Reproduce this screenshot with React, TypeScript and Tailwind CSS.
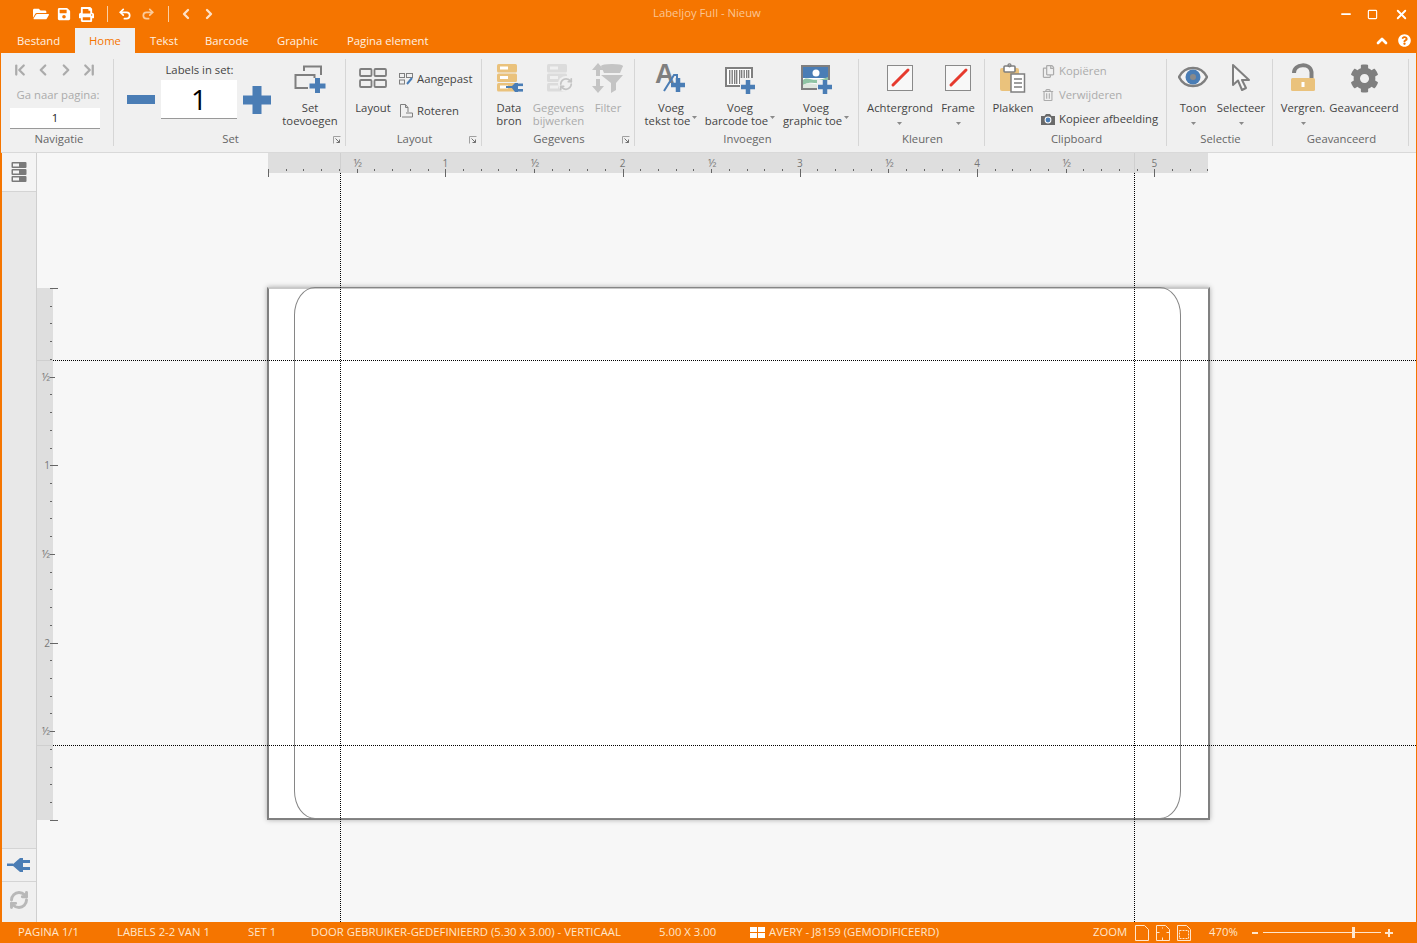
import React from "react";
import { FaFolderOpen, FaSave, FaPrint, FaCog, FaRegTrashAlt, FaRegCopy, FaQuestionCircle } from "react-icons/fa";
import { ChevronLeft, ChevronRight, ChevronUp, ChevronFirst, ChevronLast, Undo2, Redo2, RefreshCw, Minus, Square, X } from "lucide-react";

const BLUE = "#4a7db5";
const TAN = "#eac27c";
const GRAY = "#7f7f7f";

const Plus = ({ x, y, s = 14, t = 4, c = BLUE }: { x: number; y: number; s?: number; t?: number; c?: string }) => (
  <g fill={c}>
    <rect x={x - s / 2} y={y - t / 2} width={s} height={t} />
    <rect x={x - t / 2} y={y - s / 2} width={t} height={s} />
  </g>
);

const DataIcon = ({ c, plug = true, slot = "#fff" }: { c: string; plug?: boolean; slot?: string }) => (
  <svg width="28" height="28" viewBox="0 0 28 28" className="translate-x-[2px]">
    {[0, 9.5, 19].map((y) => (
      <g key={y}>
        <rect x="0" y={y} width="20" height="8.5" rx="1.5" fill={c} />
        <rect x="3" y={y + 2.5} width="8" height="3" fill={slot} />
      </g>
    ))}
    {plug ? (
      <g fill={BLUE}>
        <rect x="9" y="22" width="7" height="2" />
        <path d="M14 23l4-4h3v9h-3z" />
        <rect x="21" y="19.5" width="5" height="2.6" />
        <rect x="21" y="25" width="5" height="2.6" />
      </g>
    ) : (
      <g>
        <circle cx="19" cy="20" r="8" fill="#f0f0f0" />
        <foreignObject x="12" y="13" width="14" height="14">
          <RefreshCw size={14} strokeWidth={3} color="#c4c4c4" />
        </foreignObject>
      </g>
    )}
  </svg>
);

const FilterIcon = () => (
  <svg width="32" height="30" viewBox="0 0 32 30" fill="#c4c4c4">
    <path d="M9 12h22l-7 8v7l-5 3V20z" />
    <ellipse cx="20" cy="3" rx="11" ry="2" />
    <path d="M9 3h22l-3 7H12z" />
    <path d="M6 0l6 7H8v6H4V7H0z" />
    <path d="M6 30L0 23h4v-7h4v7h4z" />
  </svg>
);

const TextIcon = () => (
  <svg width="32" height="32" viewBox="0 0 32 32" className="overflow-visible">
    <text x="0" y="21" fontFamily="Liberation Sans" fontWeight="700" fontSize="27" fill={GRAY}>A</text>
    <path d="M9 29L19 13h3v16" fill="none" stroke={BLUE} strokeWidth="2" />
    <Plus x={23} y={23} s={14} t={4.5} />
  </svg>
);

const BarcodeIcon = () => (
  <svg width="32" height="30" viewBox="0 0 32 30" className="translate-y-[2px] translate-x-[1px]">
    <rect x="1" y="3" width="26" height="18" fill="#fff" stroke={GRAY} strokeWidth="2" />
    {[4, 6.5, 9, 11, 14, 16, 18.5, 21, 23].map((x) => (
      <rect key={x} x={x} y="5" width="1.4" height="14" fill={GRAY} />
    ))}
    <rect x="15" y="13" width="17" height="17" fill="#f0f0f0" />
    <Plus x={23} y={22} s={14} t={4.5} />
  </svg>
);

const GraphicIcon = () => (
  <svg width="32" height="30" viewBox="0 0 32 30" className="translate-y-[2px] translate-x-[1px]">
    <rect x="1" y="1" width="27" height="23" fill="#fff" stroke={GRAY} strokeWidth="2" />
    <rect x="2" y="2" width="25" height="11" fill={BLUE} />
    <circle cx="15" cy="8" r="3.5" fill="#fff" />
    <path d="M2 15c5-5 10 4 25-3v5c-8 5-14-3-25 3z" fill="#8fc4a4" />
    <path d="M2 20c8-5 14 3 25-3v6H2z" fill="#dfe7df" />
    <rect x="16" y="15" width="16" height="15" fill="#f0f0f0" />
    <Plus x={24} y={22} s={14} t={4.5} />
  </svg>
);

const ColorIcon = () => (
  <svg width="26" height="26" viewBox="0 0 26 26">
    <rect x="0.5" y="0.5" width="25" height="25" fill="#f8f8f8" stroke="#8a8a8a" />
    <path d="M6 20L21 5" stroke="#e63a2e" strokeWidth="3" strokeLinecap="round" />
  </svg>
);

const ClipboardIcon = () => (
  <svg width="26" height="30" viewBox="0 0 26 30">
    <rect x="0" y="5" width="19" height="23" rx="2" fill={TAN} />
    <rect x="4" y="3" width="11" height="6" rx="1" fill="#fff" stroke={GRAY} strokeWidth="1.6" />
    <rect x="8" y="0.8" width="3" height="3" rx="1.5" fill="none" stroke={GRAY} strokeWidth="1.2" />
    <rect x="11" y="11" width="13.5" height="18" fill="#fff" stroke={GRAY} strokeWidth="1.5" />
    <path d="M14 16h8M14 20h8M14 24h8" stroke={GRAY} strokeWidth="1.6" />
  </svg>
);

const EyeIcon = () => (
  <svg width="30" height="24" viewBox="0 0 30 24" className="-translate-y-[1px]">
    <path d="M1 12C7 0 23 0 29 12C23 24 7 24 1 12z" fill="#f4f4f4" stroke={GRAY} strokeWidth="2.4" />
    <circle cx="15" cy="12" r="7.5" fill={BLUE} />
    <circle cx="15" cy="12" r="3" fill="#8a8a8a" />
  </svg>
);

const CursorIcon = () => (
  <svg width="20" height="30" viewBox="0 0 20 30">
    <path d="M2 2v20l5-4.5L11 27l4-2-4-8h7z" fill="#f6f6f6" stroke={GRAY} strokeWidth="2" strokeLinejoin="round" />
  </svg>
);

const LockIcon = () => (
  <svg width="26" height="30" viewBox="0 0 26 30">
    <path d="M4 10C4 1 20-1 21.500 9v6" fill="none" stroke={GRAY} strokeWidth="4" />
    <rect x="1" y="15" width="24" height="13" rx="1.5" fill={TAN} />
    <rect x="11.500" y="19" width="3" height="5" fill="#fff" />
  </svg>
);

const SetIcon = () => (
  <svg width="32" height="30" viewBox="0 0 32 30" fill="none">
    <path d="M10 8V3.500h17V12" stroke={GRAY} strokeWidth="2" />
    <path d="M14 25H1.500V12h19v3" stroke={GRAY} strokeWidth="2" />
    <Plus x={23.500} y={23} s={16} t={5} />
  </svg>
);

const LayoutIcon = () => (
  <svg width="28" height="20" viewBox="0 0 28 20" fill="none" stroke={GRAY} strokeWidth="1.8">
    <rect x="1" y="1" width="11.500" height="7" rx="1" />
    <rect x="15.500" y="1" width="11.500" height="7" rx="1" />
    <rect x="1" y="12" width="11.500" height="7" rx="1" />
    <rect x="15.500" y="12" width="11.500" height="7" rx="1" />
  </svg>
);

const CustomIcon = () => (
  <svg width="14" height="12" viewBox="0 0 14 12" fill="none" stroke={GRAY}>
    <rect x="0.500" y="0.500" width="5" height="4" />
    <rect x="7.500" y="0.500" width="6" height="4" />
    <rect x="0.500" y="7" width="5" height="4" />
    <path d="M8 11l5-6" stroke={BLUE} strokeWidth="2" />
  </svg>
);

const RotateIcon = () => (
  <svg width="14" height="14" viewBox="0 0 14 14" fill="none" stroke={GRAY}>
    <path d="M1.500 13V0.500h5l2.500 3V8M3 13h10.500V9H7" />
    <path d="M6.500 0.500v3H9" />
  </svg>
);

const CameraIcon = () => (
  <svg width="14" height="12" viewBox="0 0 14 12">
    <path d="M0 3h3.500L5 1h4l1.500 2H14v9H0z" fill="#6a6a6a" />
    <circle cx="7" cy="7" r="3.400" fill="#fff" />
    <circle cx="7" cy="7" r="2.400" fill={BLUE} />
  </svg>
);

const Launcher = () => (
  <svg width="8" height="8" viewBox="0 0 8 8" className="absolute right-[4px] bottom-[2px]" fill="none">
    <path d="M0.500 7.500V0.500h7" stroke="#a0a0a0" />
    <path d="M2.500 2.500l4 4M6.500 3.500v3h-3" stroke="#707070" />
  </svg>
);

const Caret = () => (
  <svg width="5" height="3" viewBox="0 0 5 3" className="inline-block">
    <path d="M0 0h5L2.500 3z" fill="#8a8a8a" />
  </svg>
);

const Group = ({ w, label, launcher, children }: { w: number; label: string; launcher?: boolean; children: React.ReactNode }) => (
  <div className="relative flex flex-col border-r border-[#d6d6d6] shrink-0" style={{ width: w }}>
    <div className="flex flex-1">{children}</div>
    <div className="h-[14px] leading-[14px] text-center text-[#666] pl-[2px]">{label}</div>
    {launcher && <Launcher />}
  </div>
);

const Btn = ({
  w,
  icon,
  lines,
  caret,
  below,
  disabled,
}: {
  w: number;
  icon: React.ReactNode;
  lines: string[];
  caret?: boolean;
  below?: boolean;
  disabled?: boolean;
}) => (
  <div className={`flex flex-col items-center shrink-0 ${disabled ? "text-[#ababab]" : "text-[#444]"}`} style={{ width: w }}>
    <div className="h-[38px] flex items-center justify-center">{icon}</div>
    <div className="mt-[4px] text-center leading-[13px] whitespace-nowrap">
      {lines.map((l, i) => (
        <div key={l} className="h-[13px] flex items-center justify-center">
          {l}
          {caret && i === lines.length - 1 && (
            <span className="ml-[2px] h-[9px] flex items-start">
              <Caret />
            </span>
          )}
        </div>
      ))}
      {below && (
        <div className="h-[13px] mt-[3px] flex items-center justify-center">
          <Caret />
        </div>
      )}
    </div>
  </div>
);

const Row = ({ icon, text, disabled }: { icon: React.ReactNode; text: string; disabled?: boolean }) => (
  <div className={`flex items-center h-[24px] whitespace-nowrap ${disabled ? "text-[#ababab]" : "text-[#444]"}`}>
    <span className="w-[14px] mr-[4px] flex items-center justify-center">{icon}</span>
    {text}
  </div>
);

const Ruler = () => {
  const ticks = Array.from({ length: 54 }, (_, i) => i);
  return (
    <svg width="945" height="26" className="absolute left-[231px] top-0 overflow-visible">
      <rect x="0" y="0" width="940" height="20" fill="#dedede" />
      {ticks.map((i) => {
        const x = Math.round(i * 17.725) + 0.5;
        const major = i % 10 === 0;
        const half = i % 5 === 0;
        const y2 = major ? 24 : half ? 20 : 18;
        return <line key={i} x1={x} x2={x} y1={16} y2={y2} stroke="#666" />;
      })}
      {[1, 2, 3, 4, 5].map((n) => (
        <text key={n} x={n * 177.25} y="14" fontSize="10" fill="#777" textAnchor="middle">{n}</text>
      ))}
      {[0, 1, 2, 3, 4].map((n) => (
        <text key={n} x={(n + 0.5) * 177.25 + 1} y="14" fontSize="11" fill="#777" textAnchor="middle">½</text>
      ))}
      <line x1="72.500" x2="72.500" y1="0" y2="20" stroke="#cfcfcf" />
      <line x1="866.500" x2="866.500" y1="0" y2="20" stroke="#cfcfcf" />
    </svg>
  );
};

const SideRuler = () => {
  const ticks = Array.from({ length: 31 }, (_, i) => i);
  return (
    <svg width="22" height="533" className="absolute left-0 top-[135px] overflow-visible">
      <rect x="0" y="0" width="16" height="532" fill="#dedede" />
      {ticks.map((i) => {
        const y = Math.round(i * 17.725) + 0.5;
        const major = i % 10 === 0;
        const half = i % 5 === 0;
        const x2 = major ? 21 : half ? 18 : 15;
        return <line key={i} x1={13} x2={x2} y1={y} y2={y} stroke="#666" />;
      })}
      {[1, 2].map((n) => (
        <text key={n} x="10" y={n * 177.25 + 4} fontSize="10" fill="#777" textAnchor="middle">{n}</text>
      ))}
      {[0, 1, 2].map((n) => (
        <text key={n} x="9" y={(n + 0.5) * 177.25 + 4} fontSize="11" fill="#777" textAnchor="middle">½</text>
      ))}
      <line x1="0" x2="15" y1="72.500" y2="72.500" stroke="#cfcfcf" />
      <line x1="0" x2="15" y1="457.500" y2="457.500" stroke="#cfcfcf" />
    </svg>
  );
};

const PageIcon = ({ kind }: { kind: 0 | 1 | 2 }) => (
  <svg width="14" height="16" viewBox="0 0 14 16" fill="none" stroke="#ffe6cc" className="shrink-0">
    <path d="M0.500 0.500h9l4 4v11h-13z" />
    {kind === 1 && <path d="M0.500 7.500h3M10.500 7.500h3M6.500 2.500v1M6.500 12.500v3" />}
    {kind === 2 && <rect x="2.500" y="5.500" width="9" height="8" strokeDasharray="2 1" />}
  </svg>
);

export default function App() {
  return (
    <div
      className="w-[1417px] h-[943px] overflow-hidden flex flex-col bg-[#f57500] text-[11.3px]"
      style={{ fontFamily: '"Open Sans", sans-serif' }}
    >
      <header className="h-[28px] flex items-center relative text-white shrink-0">
        <div className="flex items-center pl-[29px]">
          <span className="w-[23px] flex justify-center"><FaFolderOpen size={16} /></span>
          <span className="w-[23px] flex justify-center"><FaSave size={14} /></span>
          <span className="w-[23px] flex justify-center"><FaPrint size={15} /></span>
          <span className="w-px h-[16px] bg-[#fbcfa3] ml-[9px] mr-[6px]" />
          <span className="w-[22px] flex justify-center"><Undo2 size={14} strokeWidth={3} /></span>
          <span className="w-[23px] flex justify-center text-[#fbcb9b]"><Redo2 size={14} strokeWidth={3} /></span>
          <span className="w-px h-[16px] bg-[#fbcfa3] ml-[9px] mr-[6px]" />
          <span className="w-[22px] flex justify-center text-[#fde2c8]"><ChevronLeft size={16} strokeWidth={3.5} /></span>
          <span className="w-[24px] flex justify-center text-[#fde2c8]"><ChevronRight size={16} strokeWidth={3.5} /></span>
        </div>
        <div className="absolute left-[653px] top-[5px] text-[#fbc694]">Labeljoy Full - Nieuw</div>
        <div className="ml-auto flex items-center pr-[7px]">
          <Minus size={14} strokeWidth={3} className="mr-[14px]" />
          <Square size={11} strokeWidth={2.5} className="mr-[16px]" />
          <X size={15} strokeWidth={3} className="mr-[1px]" />
        </div>
      </header>
      <nav className="h-[25px] flex items-stretch text-[#fff1e2] shrink-0 relative">
        <div className="w-[75px] pl-[17px] pt-[5px]">Bestand</div>
        <div className="w-[60px] bg-[#f0f0f0] text-[#f57500] text-center pt-[5px]">Home</div>
        <div className="w-[70px] pl-[15px] pt-[5px]">Tekst</div>
        <div className="w-[72px] pt-[5px]">Barcode</div>
        <div className="w-[70px] pt-[5px]">Graphic</div>
        <div className="pt-[5px]">Pagina element</div>
        <div className="ml-auto flex items-center pr-[6px] text-white">
          <ChevronUp size={16} strokeWidth={4} className="mr-[8px]" />
          <FaQuestionCircle size={13} />
        </div>
      </nav>

      <div className="h-[100px] mx-px bg-[#f0f0f0] border-b border-[#d9d9d9] flex pl-[2px] pt-[6px] pb-[6px] shrink-0">
        <Group w={111} label="Navigatie">
          <div className="w-full flex flex-col items-center">
            <div className="self-start ml-[8px] flex items-center gap-[5px] text-[#ababab] mt-[3px] h-[16px]">
              <ChevronFirst size={18} strokeWidth={3} />
              <ChevronLeft size={18} strokeWidth={3} />
              <ChevronRight size={18} strokeWidth={3} />
              <ChevronLast size={18} strokeWidth={3} />
            </div>
            <div className="text-[#ababab] mt-[9px] leading-[16px]">Ga naar pagina:</div>
            <div className="self-start ml-[7px] w-[90px] h-[21px] mt-[5px] bg-white border-b border-[#999] text-center leading-[20px] text-[#222]">1</div>
          </div>
        </Group>
        <Group w={232} label="Set" launcher>
          <div className="flex w-full">
            <div className="ml-[13px] w-[145px] flex flex-col">
              <div className="text-center text-[#444] leading-[16px] mt-[3px]">Labels in set:</div>
              <div className="flex items-center gap-[6px] mt-[2px]">
                <span className="w-[28px] h-[9px] bg-[#4a7db5]" />
                <div className="w-[76px] h-[39px] bg-white border-b border-[#999] text-center text-[28px] leading-[38px] text-black">1</div>
                <svg width="28" height="28" viewBox="0 0 28 28"><Plus x={14} y={14} s={28} t={9} /></svg>
              </div>
            </div>
            <div className="ml-[8px]"><Btn w={60} icon={<SetIcon />} lines={["Set", "toevoegen"]} /></div>
          </div>
        </Group>
        <Group w={136} label="Layout" launcher>
          <div className="flex w-full">
            <div className="ml-px"><Btn w={52} icon={<LayoutIcon />} lines={["Layout"]} /></div>
            <div className="flex flex-col pt-[8px] gap-[12px]">
              <div className="h-[20px]"><Row icon={<CustomIcon />} text="Aangepast" /></div>
              <div className="h-[20px]"><Row icon={<RotateIcon />} text="Roteren" /></div>
            </div>
          </div>
        </Group>
        <Group w={153} label="Gegevens" launcher>
          <div className="flex w-full">
            <Btn w={54} icon={<DataIcon c={TAN} />} lines={["Data", "bron"]} />
            <Btn w={45} disabled icon={<DataIcon c="#dcdcdc" plug={false} slot="#f0f0f0" />} lines={["Gegevens", "bijwerken"]} />
            <Btn w={54} disabled icon={<FilterIcon />} lines={["Filter"]} />
          </div>
        </Group>
        <Group w={224} label="Invoegen">
          <div className="flex w-full">
            <Btn w={72} icon={<TextIcon />} lines={["Voeg", "tekst toe"]} caret />
            <Btn w={66} icon={<BarcodeIcon />} lines={["Voeg", "barcode toe"]} caret />
            <Btn w={86} icon={<GraphicIcon />} lines={["Voeg", "graphic toe"]} caret />
          </div>
        </Group>
        <Group w={126} label="Kleuren">
          <div className="flex w-full">
            <Btn w={82} icon={<ColorIcon />} lines={["Achtergrond"]} below />
            <Btn w={34} icon={<ColorIcon />} lines={["Frame"]} below />
          </div>
        </Group>
        <Group w={182} label="Clipboard">
          <div className="flex w-full">
            <Btn w={56} icon={<ClipboardIcon />} lines={["Plakken"]} />
            <div className="flex flex-col">
              <Row disabled icon={<FaRegCopy size={13} />} text="Kopiëren" />
              <Row disabled icon={<FaRegTrashAlt size={12} />} text="Verwijderen" />
              <Row icon={<CameraIcon />} text="Kopieer afbeelding" />
            </div>
          </div>
        </Group>
        <Group w={106} label="Selectie">
          <div className="flex w-full">
            <Btn w={52} icon={<EyeIcon />} lines={["Toon"]} below />
            <Btn w={44} icon={<CursorIcon />} lines={["Selecteer"]} below />
          </div>
        </Group>
        <Group w={136} label="Geavanceerd">
          <div className="flex w-full">
            <Btn w={60} icon={<LockIcon />} lines={["Vergren."]} below />
            <Btn w={62} icon={<FaCog size={29} color={GRAY} />} lines={["Geavanceerd"]} />
          </div>
        </Group>
      </div>

      <main className="flex-1 mx-px flex min-h-0 text-[#444]">
        <aside className="w-[35px] ml-px bg-[#e8e8e8] border-r border-[#cfcfcf] flex flex-col shrink-0">
          <div className="h-[39px] bg-[#f4f4f4] border-b border-[#d4d4d4] flex items-center justify-center">
            <svg width="16" height="20" viewBox="0 0 16 20">
              {[0, 7, 14].map((y) => (
                <g key={y}>
                  <rect x="0.500" y={y} width="15" height="6" rx="1" fill="#7a7a7a" />
                  <rect x="2" y={y + 1.500} width="6" height="3" fill="#f4f4f4" />
                </g>
              ))}
            </svg>
          </div>
          <div className="mt-auto h-[33px] bg-[#f0f0f0] border-t border-[#d4d4d4] flex items-center justify-center">
            <svg width="24" height="16" viewBox="0 0 24 16" fill={BLUE}>
              <rect x="0" y="6.500" width="6" height="2.500" />
              <path d="M5 8l8-7h2v14h-2z" />
              <rect x="15" y="1" width="1" height="14" />
              <rect x="16" y="3" width="7" height="3" />
              <rect x="16" y="10" width="7" height="3" />
            </svg>
          </div>
          <div className="h-[41px] pb-[4px] bg-[#f0f0f0] border-t border-[#d4d4d4] flex items-center justify-center">
            <RefreshCw size={20} strokeWidth={3.5} color="#b8b8b8" />
          </div>
        </aside>
        <section className="relative flex-1 bg-[#f7f7f7] overflow-hidden">
          <Ruler />
          <SideRuler />
          <div className="absolute left-[230px] top-[134px] w-[943px] h-[533px] bg-white border-2 border-[#808080] border-t-[#c9c9c9] shadow-[0_0_5px_rgba(0,0,0,0.3)]">
            <div className="ml-[25px] w-[887px] -mt-[2px] h-[532px] border border-[#868686] rounded-[21px/28px]" />
          </div>
          <div className="absolute left-[303px] top-[20px] bottom-0 border-l border-dotted border-black" />
          <div className="absolute left-[1097px] top-[20px] bottom-0 border-l border-dotted border-black" />
          <div className="absolute left-[16px] right-0 top-[207px] border-t border-dotted border-black" />
          <div className="absolute left-[16px] right-0 top-[592px] border-t border-dotted border-black" />
        </section>
      </main>

      <footer className="h-[21px] flex items-center text-[#ffe6cc] shrink-0 whitespace-nowrap">
        <div className="w-[18px]" />
        <div className="w-[99px]">PAGINA 1/1</div>
        <div className="w-[131px]">LABELS 2-2 VAN 1</div>
        <div className="w-[63px]">SET 1</div>
        <div className="w-[348px]">DOOR GEBRUIKER-GEDEFINIEERD (5.30 X 3.00) - VERTICAAL</div>
        <div className="w-[91px]">5.00 X 3.00</div>
        <div className="w-[343px] flex items-center gap-[4px]">
          <span className="grid grid-cols-2 gap-px w-[15px] h-[11px]">
            <span className="bg-white" /><span className="bg-white" /><span className="bg-white" /><span className="bg-white" />
          </span>
          AVERY - J8159 (GEMODIFICEERD)
        </div>
        <div className="w-[42px]">ZOOM</div>
        <div className="w-[21px]"><PageIcon kind={0} /></div>
        <div className="w-[21px]"><PageIcon kind={1} /></div>
        <div className="w-[32px]"><PageIcon kind={2} /></div>
        <div className="w-[43px]">470%</div>
        <div className="w-[6px] h-[2px] bg-[#ffe6cc]" />
        <div className="ml-[5px] w-[118px] h-px bg-[#ffe6cc] relative">
          <span className="absolute left-[89px] -top-[5px] w-[3px] h-[11px] bg-[#ffe6cc]" />
        </div>
        <svg width="8" height="8" viewBox="0 0 8 8" className="ml-[4px]"><Plus x={4} y={4} s={8} t={2} c="#ffe6cc" /></svg>
      </footer>
    </div>
  );
}
